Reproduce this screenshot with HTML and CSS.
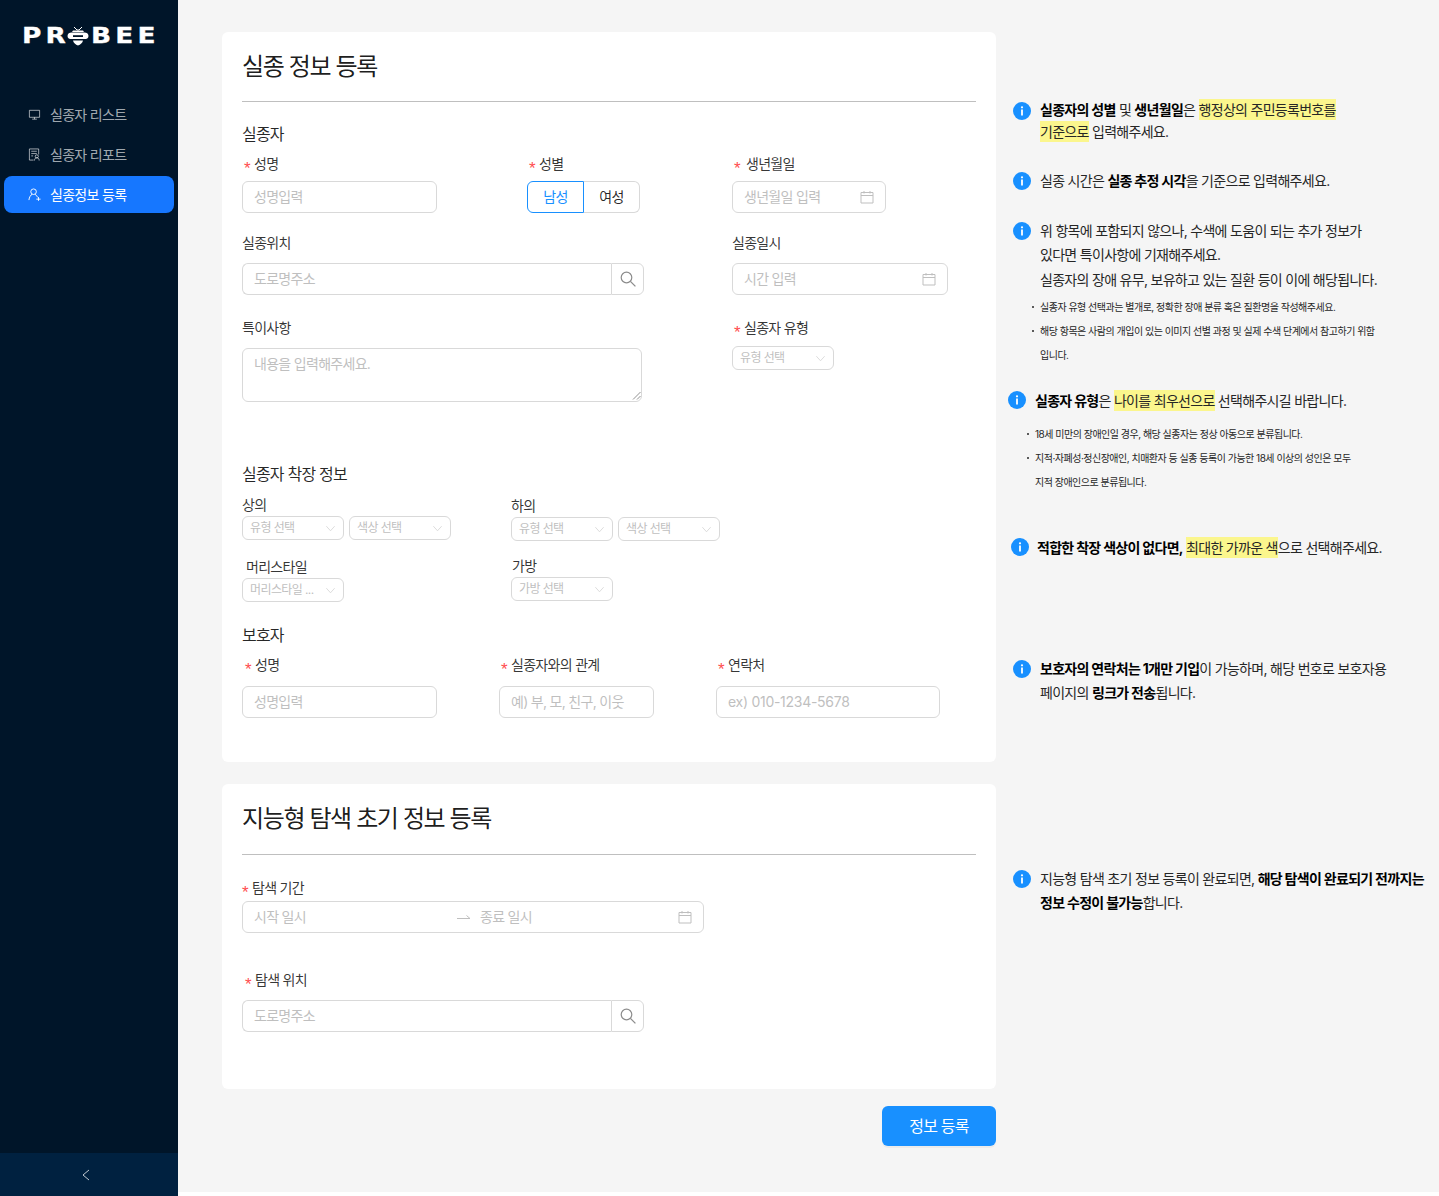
FILE: index.html
```html
<!DOCTYPE html>
<html lang="ko">
<head>
<meta charset="utf-8">
<title>실종 정보 등록</title>
<link rel="stylesheet" href="styles.css">
</head>
<body>
<svg class="defs" width="0" height="0" aria-hidden="true">
  <symbol id="i-cal" viewBox="0 0 14 14"><path d="M1 2.500h12v10.500H1zM1 5.500h12M4 1v2.500M10 1v2.500" fill="none" stroke="currentColor" stroke-width="1"/></symbol>
  <symbol id="i-search" viewBox="0 0 16 16"><circle cx="6.500" cy="6.500" r="5.300" fill="none" stroke="currentColor" stroke-width="1.200"/><path d="M10.400 10.400l5 5" fill="none" stroke="currentColor" stroke-width="1.300"/></symbol>
  <symbol id="i-down" viewBox="0 0 12 12"><path d="M1.500 3.500L6 8.500l4.500-5" fill="none" stroke="currentColor" stroke-width="1"/></symbol>
  <symbol id="i-info" viewBox="0 0 18 18"><circle cx="9" cy="9" r="9" fill="#1890ff"/><circle cx="9" cy="5.300" r="1.100" fill="#fff"/><rect x="8.100" y="7.500" width="1.800" height="6" fill="#fff"/></symbol>
</svg>
<div class="app">
  <aside class="sider">
    <div class="logo">
      <span class="logo-text">PR</span>
      <svg class="bee" viewBox="0 0 22 20" width="22" height="20" aria-hidden="true">
        <path d="M7 1l3 3h2l3-3" fill="none" stroke="#fff" stroke-width="1"/>
        <path d="M6 4.500h10l1 1.500H5zM0.500 10c0-2.500 2-3.500 4-3.500h13c2 0 4 1 4 3.500s-2 3-4 3h-13c-2 0-4-.5-4-3zM6 14.500h10c-.5 2.500-2.500 4-5 5-2.500-1-4.500-2.500-5-5z" fill="#fff"/>
        <rect x="6" y="9.200" width="10" height="1.800" fill="#001529"/>
      </svg>
      <span class="logo-text logo-end">BEE</span>
    </div>
    <nav class="menu">
      <a class="menu-item">
        <svg class="menu-icon" viewBox="0 0 14 14" aria-hidden="true"><path d="M1.500 2.500h11v7.500h-11zM7 10v2M4.500 12h5" fill="none" stroke="currentColor"/></svg>
        <span>실종자 리스트</span>
      </a>
      <a class="menu-item">
        <svg class="menu-icon" viewBox="0 0 14 14" aria-hidden="true"><path d="M6 13H1.500V1h10v6M3.500 3.500h6M3.500 6h6M3.500 8.500h2" fill="none" stroke="currentColor"/><circle cx="9.500" cy="9" r="1.700" fill="none" stroke="currentColor"/><path d="M7 13.500c0-2 1-3 2.500-3s2.500 1 2.500 3" fill="none" stroke="currentColor"/></svg>
        <span>실종자 리포트</span>
      </a>
      <a class="menu-item is-active">
        <svg class="menu-icon" viewBox="0 0 14 14" aria-hidden="true"><circle cx="6" cy="4" r="3" fill="none" stroke="currentColor"/><path d="M1 13c.3-3 1.800-5.500 3.500-6.300M7.500 6.800c1.300.6 2.300 1.700 2.800 3.200M9 12h4.500M11.300 9.800v4" fill="none" stroke="currentColor"/></svg>
        <span>실종정보 등록</span>
      </a>
    </nav>
    <div class="collapse">
      <svg viewBox="0 0 10 12" width="10" height="12" aria-hidden="true"><path d="M8 1L2 6l6 5" fill="none" stroke="currentColor" stroke-width="1"/></svg>
    </div>
  </aside>

  <main class="main">
    <div class="forms">
      <section class="card card-missing">
        <h1 class="card-title">실종 정보 등록</h1>
        <h2 class="section-title first">실종자</h2>
        <div class="row row-a">
          <div>
            <div class="label"><i class="req">*</i>성명</div>
            <div class="input w195"><span class="ph">성명입력</span></div>
          </div>
          <div>
            <div class="label"><i class="req">*</i>성별</div>
            <div class="radio">
              <span class="radio-on">남성</span><span class="radio-off">여성</span>
            </div>
          </div>
          <div>
            <div class="label"><i class="req wide">*</i>생년월일</div>
            <div class="input w154 spread"><span class="ph">생년월일 입력</span><svg class="cal"><use href="#i-cal"/></svg></div>
          </div>
        </div>
        <div class="row row-b">
          <div>
            <div class="label plain">실종위치</div>
            <div class="search"><span class="search-field"><span class="ph">도로명주소</span></span><span class="search-btn"><svg class="mag"><use href="#i-search"/></svg></span></div>
          </div>
          <div>
            <div class="label plain">실종일시</div>
            <div class="input w216 spread"><span class="ph">시간 입력</span><svg class="cal"><use href="#i-cal"/></svg></div>
          </div>
        </div>
        <div class="row row-c">
          <div>
            <div class="label plain">특이사항</div>
            <div class="textarea"><span class="ph">내용을 입력해주세요.</span>
              <svg class="grip" viewBox="0 0 9 9" aria-hidden="true"><path d="M1 8.500l7.500-7.500M5 8.500l3.500-3.500" fill="none" stroke="#777" stroke-width=".8"/></svg>
            </div>
          </div>
          <div>
            <div class="label plain"><i class="req">*</i>실종자 유형</div>
            <div class="select"><span>유형 선택</span><svg class="chev"><use href="#i-down"/></svg></div>
          </div>
        </div>

        <h2 class="section-title dress">실종자 착장 정보</h2>
        <div class="dress-grid">
          <div class="dress-col">
            <div class="mini-label">상의</div>
            <div class="pair">
              <div class="select"><span>유형 선택</span><svg class="chev"><use href="#i-down"/></svg></div>
              <div class="select"><span>색상 선택</span><svg class="chev"><use href="#i-down"/></svg></div>
            </div>
            <div class="mini-label gap hair">머리스타일</div>
            <div class="pair">
              <div class="select"><span>머리스타일 ...</span><svg class="chev"><use href="#i-down"/></svg></div>
            </div>
          </div>
          <div class="dress-col right">
            <div class="mini-label">하의</div>
            <div class="pair">
              <div class="select"><span>유형 선택</span><svg class="chev"><use href="#i-down"/></svg></div>
              <div class="select"><span>색상 선택</span><svg class="chev"><use href="#i-down"/></svg></div>
            </div>
            <div class="mini-label gap bag">가방</div>
            <div class="pair">
              <div class="select"><span>가방 선택</span><svg class="chev"><use href="#i-down"/></svg></div>
            </div>
          </div>
        </div>

        <h2 class="section-title guard">보호자</h2>
        <div class="row row-d">
          <div>
            <div class="label tall shift3"><i class="req tight">*</i>성명</div>
            <div class="input w195"><span class="ph">성명입력</span></div>
          </div>
          <div>
            <div class="label tall shift2"><i class="req tight">*</i>실종자와의 관계</div>
            <div class="input w155"><span class="ph">예) 부, 모, 친구, 이웃</span></div>
          </div>
          <div>
            <div class="label tall shift2"><i class="req tight">*</i>연락처</div>
            <div class="input w224"><span class="ph latin">ex) 010-1234-5678</span></div>
          </div>
        </div>
      </section>

      <section class="card card-search">
        <h1 class="card-title">지능형 탐색 초기 정보 등록</h1>
        <div class="label period"><i class="req tight">*</i>탐색 기간</div>
        <div class="range">
          <span class="range-start ph">시작 일시</span>
          <svg class="range-arrow" viewBox="0 0 14 8" aria-hidden="true"><path d="M0 5.500h13L9.500 2.500" fill="none" stroke="currentColor"/></svg>
          <span class="range-end ph">종료 일시</span>
          <svg class="cal"><use href="#i-cal"/></svg>
        </div>
        <div class="label place shift3"><i class="req tight">*</i>탐색 위치</div>
        <div class="search"><span class="search-field"><span class="ph">도로명주소</span></span><span class="search-btn"><svg class="mag"><use href="#i-search"/></svg></span></div>
      </section>

      <div class="actions"><button class="submit" type="button">정보 등록</button></div>
    </div>

    <aside class="notes">
      <div class="note n1">
        <svg class="info"><use href="#i-info"/></svg>
        <p class="lh22"><b>실종자의 성별</b> 및 <b>생년월일</b>은 <mark>행정상의 주민등록번호를</mark><br><mark>기준으로</mark> 입력해주세요.</p>
      </div>
      <div class="note n2">
        <svg class="info"><use href="#i-info"/></svg>
        <p>실종 시간은 <b>실종 추정 시각</b>을 기준으로 입력해주세요.</p>
      </div>
      <div class="note n3">
        <svg class="info"><use href="#i-info"/></svg>
        <p>위 항목에 포함되지 않으나, 수색에 도움이 되는 추가 정보가<br>있다면 특이사항에 기재해주세요.<br>실종자의 장애 유무, 보유하고 있는 질환 등이 이에 해당됩니다.</p>
      </div>
      <ul class="small">
        <li>실종자 유형 선택과는 별개로, 정확한 장애 분류 혹은 질환명을 작성해주세요.</li>
        <li>해당 항목은 사람의 개입이 있는 이미지 선별 과정 및 실제 수색 단계에서 참고하기 위함<br>입니다.</li>
      </ul>
      <div class="note n4">
        <svg class="info"><use href="#i-info"/></svg>
        <p><b>실종자 유형</b>은 <mark>나이를 최우선으로</mark> 선택해주시길 바랍니다.</p>
      </div>
      <ul class="small s2">
        <li>18세 미만의 장애인일 경우, 해당 실종자는 정상 아동으로 분류됩니다.</li>
        <li>지적·자폐성·정신장애인, 치매환자 등 실종 등록이 가능한 18세 이상의 성인은 모두<br>지적 장애인으로 분류됩니다.</li>
      </ul>
      <div class="note n5">
        <svg class="info"><use href="#i-info"/></svg>
        <p><b>적합한 착장 색상이 없다면,</b> <mark>최대한 가까운 색</mark>으로 선택해주세요.</p>
      </div>
      <div class="note n6">
        <svg class="info"><use href="#i-info"/></svg>
        <p><b>보호자의 연락처는 1개만 기입</b>이 가능하며, 해당 번호로 보호자용<br>페이지의 <b>링크가 전송</b>됩니다.</p>
      </div>
      <div class="note n7">
        <svg class="info"><use href="#i-info"/></svg>
        <p>지능형 탐색 초기 정보 등록이 완료되면, <b>해당 탐색이 완료되기 전까지는<br>정보 수정이 불가능</b>합니다.</p>
      </div>
    </aside>
  </main>
</div>
</body>
</html>
```

FILE: styles.css
```css
* { box-sizing: border-box; letter-spacing: -.05em; }
html, body { margin: 0; padding: 0; background: #fff; }
body {
  font-family: Inter, "Noto Sans CJK KR", "Noto Sans", sans-serif;
  font-size: 14px;
  color: rgba(0, 0, 0, .85);
}
.defs { position: absolute; }
.app { display: flex; align-items: flex-start; height: 1196px; overflow: hidden; }

/* sidebar */
.sider {
  width: 178px; height: 1196px; flex: none;
  background: #001529;
  display: flex; flex-direction: column;
}
.logo { display: flex; align-items: center; height: 20px; margin: 26px 0 0 22px; }
.logo-text {
  display: inline-block; transform: scaleX(1.2); transform-origin: left center;
  font-family: "DejaVu Sans", sans-serif; font-weight: 700; font-size: 22px;
  color: #fff; letter-spacing: 3.500px; line-height: 20px;
  -webkit-text-stroke: .3px #fff;
}
.bee { margin-left: 5px; flex: none; }
.logo-end { margin-left: 2px; }
.menu { margin-top: 50px; display: flex; flex-direction: column; gap: 3px; padding: 0 4px; }
.menu-item {
  display: flex; align-items: center; gap: 9px;
  height: 37px; padding-left: 24px; border-radius: 8px;
  color: rgba(255, 255, 255, .65); line-height: 37px; white-space: nowrap;
}
.menu-item.is-active { background: #1677ff; color: #fff; }
.menu-icon { width: 13px; height: 13px; flex: none; }
.collapse {
  margin-top: auto; height: 43px; background: #002140;
  display: flex; align-items: center; justify-content: center;
  color: rgba(255, 255, 255, .75); padding-right: 6px;
}

/* main */
.main {
  flex: 1; height: 1192px; background: #f5f5f5;
  display: flex; padding: 32px 0 0 44px;
}
.forms { width: 774px; flex: none; }
.card { background: #fff; border-radius: 6px; padding: 0 20px; }
.card-missing { height: 730px; }
.card-search { height: 305px; margin-top: 22px; }
.card-title {
  margin: 0; font-size: 24px; font-weight: 400; line-height: 70px; height: 70px;
  border-bottom: 1px solid #bfbfbf; letter-spacing: -.058em; color: rgba(0,0,0,.9);
}
.card-search .card-title { height: 71px; line-height: 69px; }
.section-title { margin: 0; font-size: 16px; font-weight: 400; line-height: 24px; }
.section-title.first { margin-top: 20px; }
.section-title.dress { margin-top: 60px; }
.section-title.guard { margin-top: 21px; }

.row { display: grid; }
.row-a, .row-b, .row-c { grid-template-columns: 490px 1fr; }
.row-a { grid-template-columns: 285px 205px 1fr; margin-top: 8px; }
.row-b { margin-top: 20px; }
.row-c { margin-top: 23px; }
.row-d { grid-template-columns: 257px 217px 1fr; margin-top: 8px; }

.label { line-height: 20px; height: 20px; white-space: nowrap; color: rgba(0,0,0,.8); }
.label.plain { margin-bottom: 10px; }
.row-c > div + div .label.plain { margin-bottom: 8px; }
.label.tall { height: 31px; }
.row-a .label { margin-bottom: 7px; }
.shift3 { padding-left: 3px; }
.shift2 { padding-left: 2px; }
.req {
  display: inline-block; width: 12px; font-style: normal; color: #ff4d4f; font-size: 17px;
  font-family: "Liberation Sans", sans-serif; padding-left: 2px; line-height: 1;
  vertical-align: -5px; letter-spacing: 0;
}
.req.wide { width: 14px; }
.req.tight { width: 10px; padding-left: 0; }

.input {
  height: 32px; border: 1px solid #d9d9d9; border-radius: 6px; background: #fff;
  padding: 0 11px; display: flex; align-items: center;
  line-height: 30px; white-space: nowrap;
}
.w195 { width: 195px; }
.w154 { width: 154px; }
.w155 { width: 155px; }
.w216 { width: 216px; }
.w224 { width: 224px; }
.spread { justify-content: space-between; }
.ph { color: #bfbfbf; }
.ph.latin { letter-spacing: -.02em; }
.cal { width: 14px; height: 14px; color: #bfbfbf; flex: none; }

.radio { display: flex; width: 113px; height: 32px; line-height: 30px; text-align: center; }
.radio-on {
  width: 57px; border: 1px solid #1890ff; border-radius: 6px 0 0 6px; color: #1890ff;
}
.radio-off {
  width: 56px; border: 1px solid #d9d9d9; border-left: 0; border-radius: 0 6px 6px 0;
}

.search { display: flex; width: 402px; height: 32px; }
.search-field {
  flex: 1; border: 1px solid #d9d9d9; border-right: 0; border-radius: 6px 0 0 6px;
  padding: 0 11px; line-height: 30px;
}
.search-btn {
  width: 33px; border: 1px solid #d9d9d9; border-radius: 0 6px 6px 0;
  display: flex; align-items: center; justify-content: center;
}
.mag { width: 16px; height: 16px; color: #8c8c8c; }

.textarea {
  position: relative; width: 400px; height: 54px;
  border: 1px solid #d9d9d9; border-radius: 6px; padding: 4px 11px; line-height: 22px;
}
.grip { position: absolute; right: 0; bottom: 1px; width: 9px; height: 9px; }

.select {
  width: 102px; height: 24px; border: 1px solid #d9d9d9; border-radius: 6px;
  padding: 0 7px; font-size: 12px; line-height: 22px; color: #bfbfbf; white-space: nowrap;
  display: flex; align-items: center; justify-content: space-between;
}
.chev { width: 11px; height: 11px; color: #d9d9d9; flex: none; }

.dress-grid { display: grid; grid-template-columns: 269px 1fr; margin-top: 9px; }
.mini-label { line-height: 20px; height: 20px; margin-bottom: 1px; color: rgba(0,0,0,.8); }
.right { padding-top: 1px; }
.pair { display: flex; gap: 5px; }
.gap { margin-top: 17px; }
.hair { padding-left: 4px; }
.bag { padding-left: 1px; margin-top: 15px; }

/* search card */
.period { margin-top: 23px; }
.range {
  display: flex; align-items: center; width: 462px; height: 32px; margin-top: 3px;
  border: 1px solid #d9d9d9; border-radius: 6px; padding: 0 11px; line-height: 30px;
}
.range-start { width: 203px; }
.range-arrow { width: 14px; height: 8px; color: #bfbfbf; }
.range-end { margin-left: 9px; flex: 1; }
.place { margin-top: 37px; margin-bottom: 10px; }

.actions { display: flex; justify-content: flex-end; margin-top: 17px; }
.submit {
  width: 114px; height: 40px; border: 0; border-radius: 6px; background: #1890ff; color: #fff;
  font: 16px/40px Inter, "Noto Sans CJK KR", sans-serif; padding: 0;
  box-shadow: 0 2px 0 rgba(0, 0, 0, .04);
}

/* notes */
.notes { flex: none; width: 443px; font-size: 14px; color: #262626; }
.note { display: flex; align-items: flex-start; margin-left: 17px; }
.info { width: 18px; height: 18px; flex: none; margin-right: 9px; margin-top: 3px; }
.note p { margin: 0; line-height: 24.500px; white-space: nowrap; }
.note p.lh22 { line-height: 22px; }
.note b { font-weight: 700; color: #000; }
mark { background: #fbf68d; color: inherit; padding: 2px 0; }
.n1 { margin-top: 67px; }
.n1 .info { margin-top: 3px; }
.n2 { margin-top: 26px; }
.n3 { margin-top: 25px; }
.n4 { margin: 22px 0 0 12px; }
.n4 .info { margin-top: 2px; }
.n5 { margin: 42px 0 0 15px; }
.n5 .info { margin-right: 8px; margin-top: 2px; }
.n6 { margin: 97px 0 0 17px; }
.n7 { margin: 162px 0 0 17px; }
.n6 p, .n7 p { line-height: 24px; }
.small {
  list-style: none; margin: 3px 0 0 44px; padding: 0; font-size: 10px; line-height: 24px; white-space: nowrap;
}
.small li { position: relative; }
.small li::before {
  content: ""; position: absolute; left: -8px; top: 11px; width: 2px; height: 2px;
  border-radius: 50%; background: #262626;
}
.small.s2 { margin: 8px 0 0 39px; }
```
